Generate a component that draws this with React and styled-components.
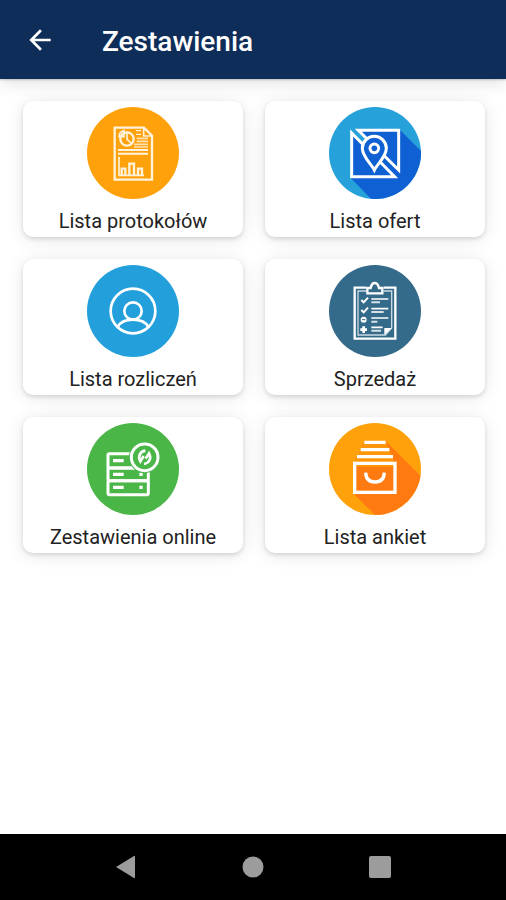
import React from 'react';
import styled, { createGlobalStyle } from 'styled-components';

const ReportIcon = () => (
    <Icon viewBox="21 21 276 276" aria-hidden="true">
        <circle cx="159" cy="159" r="138" fill="#fea10b" />
        <g fill="none" stroke="#fff3dc" strokeWidth="7">
            <path d="M104 83H192L216 107V239H104Z" />
            <path d="M191 84V108H215" strokeWidth="5" />
            <circle cx="141" cy="117" r="20" />
            <path d="M141 96V118L156 132" strokeWidth="5" />
            <path d="M132 92A20 20 0 0 0 117 110H132Z" strokeWidth="5" />
            <path d="M168 92H183M168 103H183" strokeWidth="4" />
            <path d="M170 115H204M170 124H204M162 133H204M162 141H204" strokeWidth="5" opacity="0.8" />
            <path d="M114 150H204M114 161H204" strokeWidth="6" />
            <path d="M117 170V226H192" strokeWidth="5" />
            <path d="M125 225V206H136V225M148 225V191H162V225M174 225V206H186V225" strokeWidth="7" />
        </g>
    </Icon>
);

const MapIcon = () => (
    <Icon viewBox="21 21 276 276" aria-hidden="true">
        <defs>
            <clipPath id="mapClip">
                <circle cx="159" cy="159" r="138" />
            </clipPath>
        </defs>
        <circle cx="159" cy="159" r="138" fill="#27a1da" />
        <path d="M232 88L330 186V330H180L86 234Z" fill="#0f60d3" clipPath="url(#mapClip)" />
        <path d="M89 99L218 230H89Z" fill="#0f60d3" stroke="#fff" strokeWidth="9" />
        <path d="M109 91H230V210Z" fill="#0f60d3" stroke="#fff" strokeWidth="9" />
        <path d="M157 210C149 193 121 171 121 145A36 36 0 0 1 193 145C193 171 165 193 157 210Z" fill="#0f60d3" stroke="#fff" strokeWidth="9" />
        <circle cx="157" cy="145" r="13" fill="none" stroke="#fff" strokeWidth="9" />
    </Icon>
);

const PersonIcon = () => (
    <Icon viewBox="21 21 276 276" aria-hidden="true">
        <circle cx="159" cy="159" r="138" fill="#239fdc" />
        <g fill="none" stroke="#fff" strokeWidth="8">
            <circle cx="159" cy="159" r="67" />
            <circle cx="159" cy="159" r="26" />
            <path d="M113 207C121 191 138 185 159 185S197 191 205 207" />
        </g>
    </Icon>
);

const ClipboardIcon = () => (
    <Icon viewBox="21 21 276 276" aria-hidden="true">
        <circle cx="159" cy="159" r="138" fill="#356b8a" />
        <g fill="none" stroke="#fff">
            <path d="M132 89H98V242H220V89H185" strokeWidth="7" />
            <path d="M132 99H108V231H190L209 210V99H185" strokeWidth="4" opacity="0.75" />
            <path d="M136 106V90H146C148 83 148 75 158 75S169 83 171 90H181V106Z" fill="#356b8a" strokeWidth="7" />
            <path d="M118 126L125 133L138 119M118 156L125 163L138 149" strokeWidth="6" />
            <path d="M148 123H199M148 152H199M148 180H199M148 208H182" strokeWidth="5" />
            <path d="M148 133H174M148 162H185M148 191H166M148 218H177" strokeWidth="6" opacity="0.8" />
        </g>
        <circle cx="125" cy="185" r="9" fill="#fff" />
        <path d="M120 185H130" stroke="#356b8a" strokeWidth="3" />
        <path d="M125 205V225M115 215H135" stroke="#fff" strokeWidth="8" />
        <path d="M187 231V210H209Z" fill="#fff" />
    </Icon>
);

const ServerIcon = () => (
    <Icon viewBox="21 19 276 276" aria-hidden="true">
        <circle cx="159" cy="157" r="138" fill="#4bb648" />
        <g fill="none" stroke="#fff" strokeWidth="9">
            <rect x="84" y="111" width="121" height="43" rx="4" />
            <rect x="84" y="154" width="121" height="38" rx="4" />
            <rect x="84" y="192" width="121" height="42" rx="4" />
            <path d="M99 132H131M99 173H131M99 212H131" strokeWidth="10" />
            <path d="M178 173H188M178 212H188" strokeWidth="10" />
        </g>
        <circle cx="194" cy="122" r="47" fill="#4bb648" />
        <circle cx="194" cy="122" r="40" fill="none" stroke="#fff" strokeWidth="9" />
        <g fill="none" stroke="#fff" strokeWidth="8">
            <path d="M196 102C179 105 173 120 181 134L191 118" />
            <path d="M192 142C209 139 215 124 207 110L197 126" />
        </g>
    </Icon>
);

const DrawerIcon = () => (
    <Icon viewBox="21 19 276 276" aria-hidden="true">
        <defs>
            <clipPath id="drawerClip">
                <circle cx="159" cy="157" r="138" />
            </clipPath>
        </defs>
        <circle cx="159" cy="157" r="138" fill="#fea10b" />
        <path d="M191 73L320 202V320H184L95 231L106 124Z" fill="#ff7a10" clipPath="url(#drawerClip)" />
        <path d="M128 72L94 139V150H223L191 72Z" fill="#fe960c" />
        <g fill="none" stroke="#fff" strokeWidth="10">
            <path d="M127 77H191M116 99H202M105 120H213" />
            <rect x="98" y="140" width="121" height="87" />
            <path d="M131 168C132 188 144 196 159 196S186 188 187 168" />
        </g>
    </Icon>
);

const tiles = [
    { label: 'Lista protokołów', icon: ReportIcon },
    { label: 'Lista ofert', icon: MapIcon },
    { label: 'Lista rozliczeń', icon: PersonIcon },
    { label: 'Sprzedaż', icon: ClipboardIcon },
    { label: 'Zestawienia online', icon: ServerIcon },
    { label: 'Lista ankiet', icon: DrawerIcon },
];

const App = () => {
    return (
        <Screen>
            <GlobalStyle />
            <Header>
                <BackButton type="button" aria-label="Wstecz">
                    <svg width="32" height="32" viewBox="0 0 24 24" fill="#fff" aria-hidden="true">
                        <path d="M20 11H7.83l5.59-5.59L12 4l-8 8 8 8 1.41-1.41L7.83 13H20v-2z" />
                    </svg>
                </BackButton>
                <Title>Zestawienia</Title>
            </Header>
            <Grid>
                {tiles.map(({ label, icon: TileIcon }) => (
                    <Tile type="button" key={label}>
                        <TileIcon />
                        <Label>{label}</Label>
                    </Tile>
                ))}
            </Grid>
            <NavBar>
                <NavButton type="button" aria-label="Cofnij">
                    <svg width="24" height="24" viewBox="0 0 24 24" aria-hidden="true">
                        <path d="M2 12L20 1Q21 0 21 2V22Q21 24 20 23Z" fill="#9c9c9c" />
                    </svg>
                </NavButton>
                <NavButton type="button" aria-label="Ekran główny">
                    <svg width="24" height="24" viewBox="0 0 24 24" aria-hidden="true">
                        <circle cx="12" cy="12" r="10.5" fill="#9c9c9c" />
                    </svg>
                </NavButton>
                <NavButton type="button" aria-label="Ostatnie">
                    <svg width="24" height="24" viewBox="0 0 24 24" aria-hidden="true">
                        <rect x="1" y="1" width="22" height="22" rx="2" fill="#9c9c9c" />
                    </svg>
                </NavButton>
            </NavBar>
        </Screen>
    );
};

const GlobalStyle = createGlobalStyle`
    * {
        box-sizing: border-box;
    }
    body {
        margin: 0;
        background: #fff;
        font-family: Roboto, "Liberation Sans", sans-serif;
    }
    button {
        border: none;
        padding: 0;
        font-family: inherit;
        cursor: pointer;
    }
`;

const Screen = styled.div`
    display: flex;
    flex-direction: column;
    min-height: 100vh;
`;

const Header = styled.header`
    display: flex;
    align-items: center;
    gap: 46px;
    padding: 20px 24px 19px;
    background: #0f2d59;
    box-shadow: 0 1px 2px rgba(0, 0, 0, 0.2), 0 4px 16px rgba(0, 0, 0, 0.12);
`;

const BackButton = styled.button`
    display: flex;
    background: none;
`;

const Title = styled.h1`
    margin: 0;
    padding-top: 4px;
    color: #fff;
    font-size: 28px;
    font-weight: 500;
    line-height: 36px;
`;

const Grid = styled.main`
    flex: 1;
    display: grid;
    grid-template-columns: 1fr 1fr;
    align-content: start;
    gap: 22px;
    padding: 22px 21px 22px 23px;
`;

const Tile = styled.button`
    display: flex;
    flex-direction: column;
    align-items: center;
    gap: 10px;
    padding: 6px 8px 4px;
    border-radius: 10px;
    background: #fff;
    box-shadow: 0 2px 4px rgba(0, 0, 0, 0.12), 0 2px 18px rgba(0, 0, 0, 0.1);
`;

const Icon = styled.svg`
    width: 92px;
    height: 92px;
`;

const Label = styled.span`
    color: #222;
    font-size: 20px;
    line-height: 24px;
`;

const NavBar = styled.nav`
    display: flex;
    justify-content: center;
    gap: 103px;
    padding: 21px 0;
    background: #000;
`;

const NavButton = styled.button`
    display: flex;
    background: none;
`;

export default App;
